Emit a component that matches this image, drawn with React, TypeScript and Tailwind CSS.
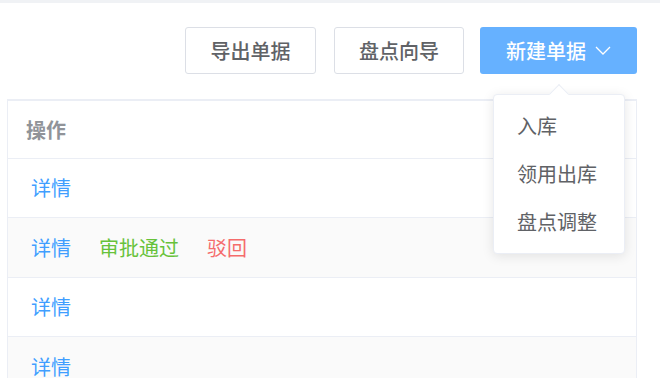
import React from 'react';

interface Row {
  id: number;
  h: string;
  actions: { label: string; color: string }[];
}

const rows: Row[] = [
  { id: 1, h: 'h-[59px]', actions: [{ label: '详情', color: 'text-[#409eff]' }] },
  {
    id: 2,
    h: 'h-[60px]',
    actions: [
      { label: '详情', color: 'text-[#409eff]' },
      { label: '审批通过', color: 'text-[#67c23a]' },
      { label: '驳回', color: 'text-[#f56c6c]' },
    ],
  },
  { id: 3, h: 'h-[59px]', actions: [{ label: '详情', color: 'text-[#409eff]' }] },
  { id: 4, h: 'h-[60px]', actions: [{ label: '详情', color: 'text-[#409eff]' }] },
];

const menuItems = ['入库', '领用出库', '盘点调整'];

export default function App() {
  return (
    <div
      className="relative h-[378px] w-[660px] overflow-hidden bg-white"
      style={{ fontFamily: '"Noto Sans CJK SC", "Noto Sans", sans-serif' }}
    >
      <div className="h-[3px] bg-[#f0f2f5]" />

      {/* toolbar */}
      <div className="flex justify-end pr-[23px] pt-[24px]">
        <button className="h-[47px] w-[131px] rounded-[3px] border border-[#dcdfe6] bg-white text-[20px] font-medium text-[#606266]">
          导出单据
        </button>
        <button className="ml-[18px] h-[47px] w-[130px] rounded-[3px] border border-[#dcdfe6] bg-white text-[20px] font-medium text-[#606266]">
          盘点向导
        </button>
        <button className="ml-[16px] flex h-[47px] w-[157px] items-center justify-center gap-[9px] rounded-[3px] bg-[#66b1ff] text-[20px] font-medium text-white">
          新建单据
          <svg width="16" height="9" viewBox="0 0 16 9" fill="none">
            <path d="M1 1l7 7 7-7" stroke="white" strokeWidth="1.3" />
          </svg>
        </button>
      </div>

      {/* table */}
      <div className="ml-[7px] mt-[25px] w-[630px] border-l border-r border-t-2 border-[#ebeef5]">
        <div className="flex h-[58px] items-center border-b border-[#ebeef5] pl-[18px] text-[20px] font-bold text-[#909399]">
          操作
        </div>
        {rows.map((row, i) => (
          <div
            key={row.id}
            className={`flex ${row.h} items-center gap-[28px] border-b border-[#ebeef5] pl-[23px] text-[20px] ${
              i % 2 === 1 ? 'bg-[#fafafa]' : 'bg-white'
            }`}
          >
            {row.actions.map((a) => (
              <span key={a.label} className={a.color}>
                {a.label}
              </span>
            ))}
          </div>
        ))}
      </div>

      {/* dropdown menu */}
      <div className="absolute left-[493px] top-[94px] w-[132px] rounded-[4px] border border-[#ebeef5] bg-white py-[7px] shadow-[0_2px_12px_0_rgba(0,0,0,0.1)]">
        <div className="absolute -top-[8px] left-[58px] h-[14px] w-[14px] rotate-45 border-l border-t border-[#ebeef5] bg-white" />
        {menuItems.map((m) => (
          <div key={m} className="flex h-[48px] items-center pl-[23px] text-[20px] text-[#606266]">
            {m}
          </div>
        ))}
      </div>
    </div>
  );
}
